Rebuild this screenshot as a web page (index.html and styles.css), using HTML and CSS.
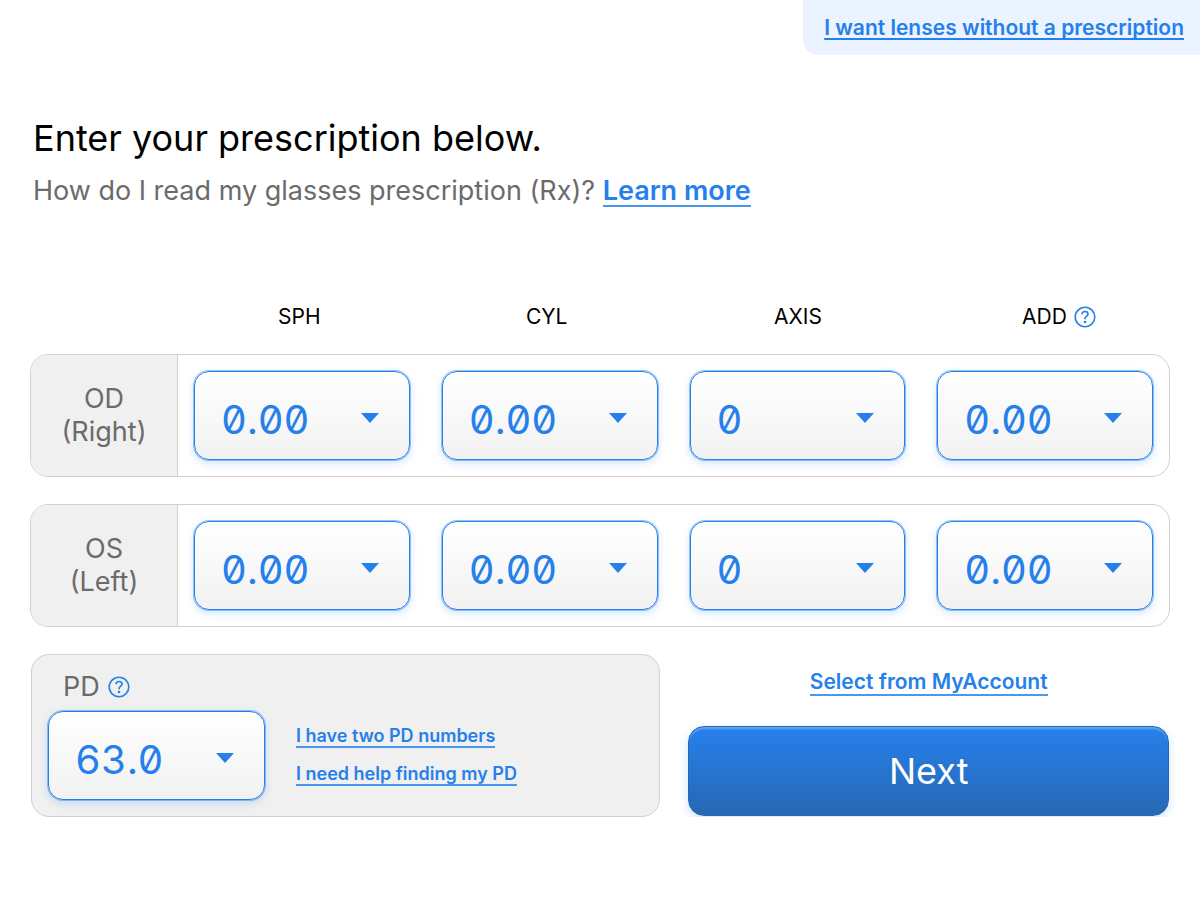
FILE: index.html
```
<!DOCTYPE html>
<html lang="en">
<head>
    <meta charset="UTF-8">
    <meta name="viewport" content="width=device-width, initial-scale=1.0">
    <title>Enter your prescription</title>
    <link rel="stylesheet" href="styles.css">
</head>
<body>
    <header class="top">
        <a href="#" class="no-rx">I want lenses without a prescription</a>
    </header>
    <main>
        <h1>Enter your prescription below.</h1>
        <p class="sub">How do I read my glasses prescription (Rx)? <a href="#">Learn more</a></p>

        <form id="rxForm">
            <div class="heads">
                <span id="sph">SPH</span>
                <span id="cyl">CYL</span>
                <span id="axis">AXIS</span>
                <span><span id="add">ADD</span>
                    <button type="button" class="help" aria-label="About ADD">
                        <svg viewBox="0 0 22 22" width="22" height="22" fill="none" stroke="currentColor"><circle cx="11" cy="11" r="9.8" stroke-width="1.6"/><path d="M8 8.3C8.1 6.5 9.3 5.5 11 5.5s3 1 3 2.6c0 2.3-3 2.3-3 4.6v.5" stroke-width="1.7"/><circle cx="11" cy="16" r="1.3" fill="currentColor" stroke="none"/></svg>
                    </button>
                </span>
            </div>

            <div class="eye">
                <div class="eye-label" id="od">OD<br>(Right)</div>
                <div class="cell"><select aria-labelledby="od sph"><option>0.00</option></select></div>
                <div class="cell"><select aria-labelledby="od cyl"><option>0.00</option></select></div>
                <div class="cell"><select aria-labelledby="od axis"><option>0</option></select></div>
                <div class="cell"><select aria-labelledby="od add"><option>0.00</option></select></div>
            </div>

            <div class="eye">
                <div class="eye-label" id="os">OS<br>(Left)</div>
                <div class="cell"><select aria-labelledby="os sph"><option>0.00</option></select></div>
                <div class="cell"><select aria-labelledby="os cyl"><option>0.00</option></select></div>
                <div class="cell"><select aria-labelledby="os axis"><option>0</option></select></div>
                <div class="cell"><select aria-labelledby="os add"><option>0.00</option></select></div>
            </div>

            <div class="bottom">
                <div class="pd">
                    <div class="pd-head">
                        <label for="pd">PD</label>
                        <button type="button" class="help" aria-label="About PD">
                            <svg viewBox="0 0 22 22" width="22" height="22" fill="none" stroke="currentColor"><circle cx="11" cy="11" r="9.8" stroke-width="1.6"/><path d="M8 8.3C8.1 6.5 9.3 5.5 11 5.5s3 1 3 2.6c0 2.3-3 2.3-3 4.6v.5" stroke-width="1.7"/><circle cx="11" cy="16" r="1.3" fill="currentColor" stroke="none"/></svg>
                        </button>
                    </div>
                    <div class="pd-body">
                        <select id="pd" name="pd"><option>63.0</option></select>
                        <div class="pd-links">
                            <a href="#">I have two PD numbers</a>
                            <a href="#">I need help finding my PD</a>
                        </div>
                    </div>
                </div>
                <div class="actions">
                    <a href="#">Select from MyAccount</a>
                    <button type="submit" class="next">Next</button>
                </div>
            </div>
        </form>
    </main>
</body>
</html>
```
FILE: styles.css
```
* {
    box-sizing: border-box;
}
body {
    margin: 0;
    background-color: white;
    color: black;
    font-family: Inter, "Liberation Sans", sans-serif;
}
a {
    color: #2680eb;
    font-weight: 600;
    text-decoration: none;
    border-bottom: 2px solid #4a97f2;
}
.top {
    display: flex;
    justify-content: flex-end;
    height: 55px;
}
.top .no-rx {
    border: none;
    padding: 15px 16px 0 21px;
    background-color: #eaf3ff;
    border-bottom-left-radius: 16px;
    font-size: 21px;
    line-height: 26px;
    text-decoration: underline;
    text-decoration-thickness: 2px;
    text-underline-offset: 3px;
    text-decoration-skip-ink: none;
}
main {
    padding: 60px 30px 0;
}
h1 {
    margin: 0;
    padding-left: 3px;
    font-size: 36px;
    line-height: 46px;
    font-weight: 400;
}
.sub {
    margin: 13px 0 0;
    padding-left: 3px;
    font-size: 27px;
    line-height: 34px;
    color: #6b6b6b;
}
.sub a {
    display: inline-block;
    line-height: 29px;
}
.heads {
    display: grid;
    grid-template-columns: repeat(4, 1fr);
    margin: 92px 0 20px;
    padding-left: 148px;
    font-size: 21px;
    line-height: 34px;
}
.heads > span {
    display: flex;
    align-items: center;
    gap: 7px;
    padding-left: 100px;
}
.help {
    display: flex;
    padding: 0;
    border: none;
    background: none;
    color: #2680eb;
    cursor: pointer;
}
.eye {
    display: grid;
    grid-template-columns: 147px repeat(4, 1fr);
    margin-bottom: 27px;
    border: 1px solid #d0d0d0;
    border-radius: 18px;
    overflow: hidden;
}
.eye-label {
    display: flex;
    align-items: center;
    justify-content: center;
    padding-bottom: 1px;
    background-color: #f0f0f0;
    border-right: 1px solid #d0d0d0;
    color: #6b6b6b;
    font-size: 27px;
    line-height: 33px;
    text-align: center;
}
.cell {
    padding: 16px;
}
select {
    appearance: none;
    display: block;
    width: 100%;
    height: 89px;
    padding: 8px 26px 0;
    border: 1px solid #2680eb;
    border-radius: 15px;
    background: url("data:image/svg+xml,%3Csvg xmlns='http://www.w3.org/2000/svg' width='18' height='10'%3E%3Cpath d='M0 0h18l-9 10z' fill='%232680eb'/%3E%3C/svg%3E") no-repeat right 30px top 41px, linear-gradient(white, #f2f2f2);
    box-shadow: 0 0 0 1px rgba(38, 128, 235, 0.45), 0 3px 9px rgba(38, 128, 235, 0.22);
    color: #2680eb;
    font-family: Inter, "DejaVu Sans Mono", monospace;
    font-size: 40px;
    font-feature-settings: "tnum", "zero";
    cursor: pointer;
}
.bottom {
    display: grid;
    grid-template-columns: 55fr 42fr;
    gap: 28px;
    padding: 0 1px;
}
.pd {
    padding: 15px 16px 16px;
    border: 1px solid #d0d0d0;
    border-radius: 18px;
    background-color: #f0f0f0;
}
.pd-head {
    display: flex;
    align-items: center;
    gap: 8px;
    padding-left: 15px;
    color: #6b6b6b;
    font-size: 27px;
    line-height: 34px;
}
.pd-body {
    display: flex;
    gap: 31px;
    margin-top: 7px;
}
.pd-body select {
    width: 217px;
}
.pd-links {
    display: flex;
    flex-direction: column;
    align-items: flex-start;
    gap: 15px;
    padding-top: 14px;
    font-size: 18px;
    line-height: 21px;
}
.actions {
    display: flex;
    flex-direction: column;
    align-items: center;
    justify-content: space-between;
    padding: 16px 0 1px;
    font-size: 21px;
    line-height: 24px;
}
.next {
    width: 100%;
    height: 90px;
    border: 1px solid #2468b4;
    border-radius: 16px;
    background: linear-gradient(#2680eb, #2668b4);
    box-shadow: inset 0 3px 2px -1px #65a7f4, 0 3px 9px rgba(38, 128, 235, 0.22);
    color: white;
    font-family: inherit;
    font-size: 36px;
    cursor: pointer;
}
```
